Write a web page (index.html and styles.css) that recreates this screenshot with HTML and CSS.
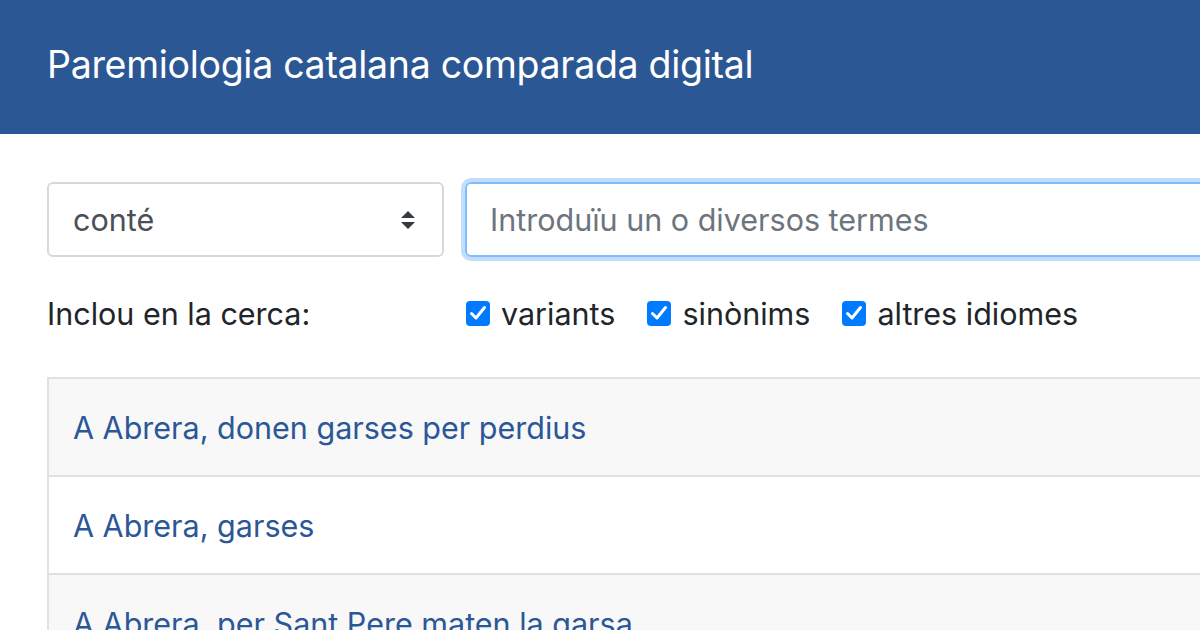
FILE: index.html
```html
<!DOCTYPE html>
<html lang="ca">
<head>
<meta charset="utf-8">
<title>Paremiologia catalana comparada digital</title>
<link rel="stylesheet" href="styles.css">
</head>
<body>
<header class="topbar">
  <h1 class="brand">Paremiologia catalana comparada digital</h1>
</header>
<main class="content">
  <form class="search">
    <div class="search-row">
      <div class="select">
        <span class="select-value">conté</span>
        <svg class="select-arrows" width="16" height="22" viewBox="0 0 16 22"><path d="M8 2 L15 9 H1 Z M8 20 L1 13 H15 Z" fill="#343a40"/></svg>
      </div>
      <div class="input">
        <span class="placeholder">Introduïu un o diversos termes</span>
      </div>
    </div>
    <div class="options">
      <span class="options-label">Inclou en la cerca:</span>
      <div class="checks">
        <label class="check"><span class="box"><svg width="24" height="24" viewBox="0 0 24 24"><path d="M5.5 12.5 L10 17 L18.5 6.5" fill="none" stroke="#fff" stroke-width="3" stroke-linecap="round" stroke-linejoin="round"/></svg></span>variants</label>
        <label class="check"><span class="box"><svg width="24" height="24" viewBox="0 0 24 24"><path d="M5.5 12.5 L10 17 L18.5 6.5" fill="none" stroke="#fff" stroke-width="3" stroke-linecap="round" stroke-linejoin="round"/></svg></span>sinònims</label>
        <label class="check"><span class="box"><svg width="24" height="24" viewBox="0 0 24 24"><path d="M5.5 12.5 L10 17 L18.5 6.5" fill="none" stroke="#fff" stroke-width="3" stroke-linecap="round" stroke-linejoin="round"/></svg></span>altres idiomes</label>
      </div>
    </div>
  </form>
  <ul class="results">
    <li class="result striped"><a href="#">A Abrera, donen garses per perdius</a></li>
    <li class="result"><a href="#">A Abrera, garses</a></li>
    <li class="result striped"><a href="#">A Abrera, per Sant Pere maten la garsa</a></li>
  </ul>
</main>
</body>
</html>
```
FILE: styles.css
```css
html, body {
  margin: 0;
  padding: 0;
  overflow: hidden;
  width: 1200px;
  height: 630px;
  background: #fff;
  font-family: Inter, "Noto Sans", "Liberation Sans", sans-serif;
}
.topbar {
  background: #2c5795;
  height: 134px;
  display: flex;
  align-items: center;
  padding: 0 0 6px 47px;
  box-sizing: border-box;
}
.brand {
  margin: 0;
  color: #fff;
  font-weight: 400;
  font-size: 37.5px;
  letter-spacing: -0.3px;
}
.content {
  padding: 48px 0 0 47px;
  width: 1400px;
}
.search-row {
  display: flex;
  gap: 21px;
}
.select {
  width: 397px;
  height: 75px;
  box-sizing: border-box;
  border: 2px solid #d6d9dc;
  border-radius: 6px;
  display: flex;
  align-items: center;
  justify-content: space-between;
  padding: 0 26px 0 24px;
  font-size: 30.5px;
  color: #495057;
}
.input {
  flex: 1;
  height: 75px;
  box-sizing: border-box;
  border: 2px solid #80bdff;
  border-radius: 6px;
  box-shadow: 0 0 0 4px #c3defd;
  display: flex;
  align-items: center;
  padding-left: 23px;
  font-size: 30.5px;
  color: #6c757d;
}
.options {
  display: flex;
  align-items: center;
  height: 112px;
  font-size: 30.5px;
  color: #212529;
}
.options-label {
  width: 419px;
}
.checks {
  display: flex;
  gap: 32px;
}
.check {
  display: flex;
  align-items: center;
  gap: 11px;
}
.box {
  width: 24px;
  height: 25px;
  border-radius: 4px;
  background: #007bff;
  display: flex;
  align-items: center;
  justify-content: center;
}
.results {
  list-style: none;
  margin: 8px 0 0;
  padding: 0;
  border-left: 2px solid #dee2e6;
}
.result {
  height: 98px;
  box-sizing: border-box;
  border-top: 2px solid #dee2e6;
  display: flex;
  align-items: center;
  padding-left: 24px;
  font-size: 30.5px;
}
.result.striped {
  background: #f8f8f8;
}
.result a {
  color: #2b5797;
  text-decoration: none;
}
```
